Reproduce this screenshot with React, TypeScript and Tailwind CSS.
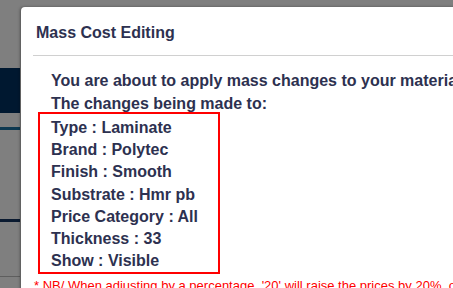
const items = [
  "Type : Laminate",
  "Brand : Polytec",
  "Finish : Smooth",
  "Substrate : Hmr pb",
  "Price Category : All",
  "Thickness : 33",
  "Show : Visible",
];

export default function App() {
  return (
    <div
      className="relative h-[288px] w-[453px] overflow-hidden bg-[#7f7f7f]"
      style={{ fontFamily: '"Liberation Sans", Arial, sans-serif' }}
    >
      {/* page behind the overlay */}
      <div className="flex w-[20px] flex-col">
        <div className="h-[68px]" />
        <div className="h-[45px] bg-[#001830]" />
        <div className="h-[14px]" />
        <div className="h-[3px] bg-[#0d3850]" />
        <div className="h-[89px]" />
        <div className="h-[3px] bg-[#0a1a30]" />
        <div className="h-[54px]" />
        <div className="h-[1px] bg-[#5e5e5e]" />
      </div>

      {/* modal */}
      <div className="absolute left-[21px] top-[7px] h-[320px] w-[640px] rounded-tl-[4px] bg-white shadow-[-1px_0_3px_rgba(0,0,0,0.35)]">
        <div className="flex h-[48px] items-center pl-[15px] pt-[4px]">
          <h4 className="text-[16px] font-bold text-[#2d3150]">Mass Cost Editing</h4>
        </div>
        <div className="ml-[12px] h-[1px] bg-[#d0d0d0]" />
        <div className="pl-[30px] pt-[14px] text-[16px] font-bold leading-[22.5px] text-[#2d3150]">
          <p className="whitespace-nowrap">You are about to apply mass changes to your materials</p>
          <p className="whitespace-nowrap">The changes being made to:</p>
        </div>
        <div className="ml-[17px] mt-[-3px] w-[182px] border-2 border-[#ff0000] pl-[11px] pt-[3px] text-[16px] font-bold leading-[22.2px] text-[#2d3150]">
          {items.map((t) => (
            <div key={t} className="whitespace-nowrap">
              {t}
            </div>
          ))}
        </div>
        <p className="mt-[3px] whitespace-nowrap pl-[13px] text-[13px] leading-[18px] text-[#ff0000]">
          * NB/ When adjusting by a percentage, '20' will raise the prices by 20%, or '-20' will lower them
        </p>
      </div>
    </div>
  );
}
